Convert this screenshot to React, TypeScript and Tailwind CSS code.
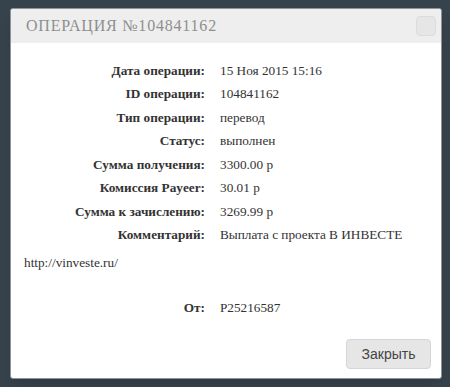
const rows: [string, string][] = [
  ["Дата операции:", "15 Ноя 2015 15:16"],
  ["ID операции:", "104841162"],
  ["Тип операции:", "перевод"],
  ["Статус:", "выполнен"],
  ["Сумма получения:", "3300.00 р"],
  ["Комиссия Payeer:", "30.01 р"],
  ["Сумма к зачислению:", "3269.99 р"],
  ["Комментарий:", "Выплата с проекта В ИНВЕСТЕ"],
];

function Row({ label, value }: { label: string; value: string }) {
  return (
    <div className="flex h-[23.5px] items-center">
      <div className="w-[194px] shrink-0 text-right font-bold">{label}</div>
      <div className="pl-[15px]">{value}</div>
    </div>
  );
}

export default function App() {
  return (
    <main className="min-h-[387px] w-[450px] bg-[#36434c] pl-[10px] pt-[8px]">
      <section className="flex h-[371px] w-[432px] flex-col overflow-hidden rounded-[3px] border border-[#8c959b] bg-white shadow-lg">
        <header className="flex h-[34px] shrink-0 items-center justify-between bg-[#eeeeee] pl-[15px] pr-[5px]">
          <h1
            className="text-[16px] uppercase tracking-[0.8px] text-[#8e8e8e]"
            style={{ fontFamily: '"Liberation Serif", "Times New Roman", serif' }}
          >
            Операция №104841162
          </h1>
          <button className="h-[20px] w-[20px] rounded-[4px] border border-[#dcdcdc] bg-[#e6e6e6]" />
        </header>

        <div
          className="flex flex-1 flex-col pt-[16px] text-[13.25px] text-[#333]"
          style={{ fontFamily: '"Liberation Serif", "Times New Roman", serif' }}
        >
          {rows.map(([l, v]) => (
            <Row key={l} label={l} value={v} />
          ))}
          <div className="flex h-[27px] items-center pl-[13px] pt-[4px]">http://vinveste.ru/</div>
          <div className="mt-[22px]">
            <Row label="От:" value="P25216587" />
          </div>
          <div className="mt-auto flex justify-end pb-[9px] pr-[10px]">
            <button
              className="h-[30px] w-[85px] rounded-[4px] border border-[#d6d6d6] bg-[#e6e6e6] text-[14px] text-[#444]"
              style={{ fontFamily: '"Liberation Sans", Arial, sans-serif' }}
            >
              Закрыть
            </button>
          </div>
        </div>
      </section>
    </main>
  );
}
